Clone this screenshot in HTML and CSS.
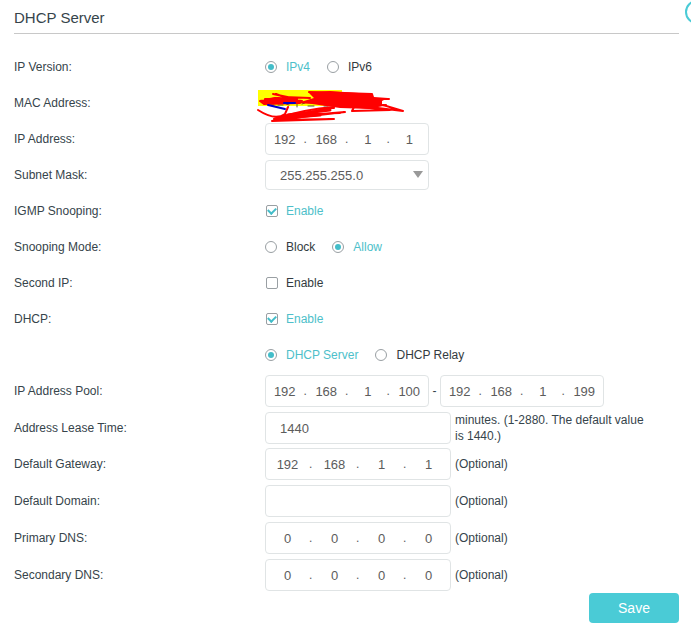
FILE: index.html
```html
<!DOCTYPE html>
<html lang="en">
<head>
<meta charset="utf-8">
<title>DHCP Server</title>
<link rel="stylesheet" href="styles.css">
</head>
<body>
<main class="panel">
  <header class="panel-head">
    <h1 class="title">DHCP Server</h1>
    <button class="help" type="button" aria-label="Help"></button>
  </header>
  <form class="form">
    <div class="row" role="radiogroup" aria-labelledby="ip-version">
      <span class="name" id="ip-version">IP Version:</span>
      <div class="field options">
        <label class="option"><input type="radio" name="version" checked><span>IPv4</span></label>
        <label class="option"><input type="radio" name="version"><span>IPv6</span></label>
      </div>
    </div>
    <div class="row">
      <span class="name">MAC Address:</span>
      <div class="field mac">
        <svg class="scribble" width="150" height="36" viewBox="257 89 150 36" fill="none" stroke-linecap="round" stroke-linejoin="round" aria-hidden="true">
          <path fill="#ffff00" d="M258 90H342V106H258Z"/>
          <path stroke="#555533" d="M271 105H274M278 105H283M286 104L289 105M297 98V107M302 104L305 103M308 106H314M324 106H328"/>
          <path fill="#ff0000" d="M297 103L314 98L308 92L330 91L373 94L374 97L388 98L382 101L382 106L370 109L340 108L312 104Z"/>
          <path fill="#ff0000" d="M264 99L275 97L296 99L302 102L296 104L263 104Z"/>
          <path stroke="#ff0000" stroke-width="2" d="M273 94L297 99L265 99L294 101L262 101L300 103L264 104L260 101L278 98L302 101M276 94L284 97L310 98M309 92L372 94M340 99L389 99M352 107L386 105"/>
          <path stroke="#0000cc" stroke-width="2" d="M268 105L285 109M284 103H295"/>
          <path stroke="#ff0000" stroke-width="2" d="M258 110Q275 121 285 114L288 107M274 119Q305 109 334 107L328 109L284 117L345 112L276 120L334 119L272 121L308 114L340 113M330 108H334M354 107L352 111L390 110L360 107L378 108L403 111L383 105"/>
          <path stroke="#ff0000" stroke-width="3" d="M288 115L330 110M282 118L320 115"/>
        </svg>
      </div>
    </div>
    <div class="row">
      <span class="name">IP Address:</span>
      <div class="field">
        <div class="ip" role="group" aria-label="IP Address">
          <input aria-label="Octet 1" value="192"><i>.</i><input aria-label="Octet 2" value="168"><i>.</i><input aria-label="Octet 3" value="1"><i>.</i><input aria-label="Octet 4" value="1">
        </div>
      </div>
    </div>
    <div class="row">
      <label class="name" for="mask">Subnet Mask:</label>
      <div class="field">
        <div class="picker">
          <select id="mask"><option>255.255.255.0</option></select>
          <svg class="arrow" width="12" height="8" viewBox="0 0 12 8" aria-hidden="true"><path d="M1 0H11L6 7Z" fill="#999999"/></svg>
        </div>
      </div>
    </div>
    <div class="row">
      <span class="name">IGMP Snooping:</span>
      <div class="field options">
        <label class="option"><input type="checkbox" aria-label="Enable IGMP Snooping" checked><span>Enable</span></label>
      </div>
    </div>
    <div class="row" role="radiogroup" aria-labelledby="snoop-mode">
      <span class="name" id="snoop-mode">Snooping Mode:</span>
      <div class="field options">
        <label class="option"><input type="radio" name="mode"><span>Block</span></label>
        <label class="option"><input type="radio" name="mode" checked><span>Allow</span></label>
      </div>
    </div>
    <div class="row">
      <span class="name">Second IP:</span>
      <div class="field options">
        <label class="option"><input type="checkbox" aria-label="Enable Second IP"><span>Enable</span></label>
      </div>
    </div>
    <div class="row">
      <span class="name">DHCP:</span>
      <div class="field options">
        <label class="option"><input type="checkbox" aria-label="Enable DHCP" checked><span>Enable</span></label>
      </div>
    </div>
    <div class="row">
      <span class="name"></span>
      <div class="field options">
        <label class="option"><input type="radio" name="dhcp" checked><span>DHCP Server</span></label>
        <label class="option"><input type="radio" name="dhcp"><span>DHCP Relay</span></label>
      </div>
    </div>
    <div class="row row-roomy">
      <span class="name">IP Address Pool:</span>
      <div class="field">
        <div class="ip" role="group" aria-label="Pool start">
          <input aria-label="Octet 1" value="192"><i>.</i><input aria-label="Octet 2" value="168"><i>.</i><input aria-label="Octet 3" value="1"><i>.</i><input aria-label="Octet 4" value="100">
        </div>
        <span class="dash">-</span>
        <div class="ip" role="group" aria-label="Pool end">
          <input aria-label="Octet 1" value="192"><i>.</i><input aria-label="Octet 2" value="168"><i>.</i><input aria-label="Octet 3" value="1"><i>.</i><input aria-label="Octet 4" value="199">
        </div>
      </div>
    </div>
    <div class="row">
      <label class="name" for="lease">Address Lease Time:</label>
      <div class="field">
        <input class="text" id="lease" value="1440">
        <span class="hint">minutes. (1-2880. The default value is 1440.)</span>
      </div>
    </div>
    <div class="row row-roomy">
      <span class="name">Default Gateway:</span>
      <div class="field">
        <div class="ip ip-wide" role="group" aria-label="Default Gateway">
          <input aria-label="Octet 1" value="192"><i>.</i><input aria-label="Octet 2" value="168"><i>.</i><input aria-label="Octet 3" value="1"><i>.</i><input aria-label="Octet 4" value="1">
        </div>
        <span class="hint">(Optional)</span>
      </div>
    </div>
    <div class="row row-roomy">
      <label class="name" for="domain">Default Domain:</label>
      <div class="field">
        <input class="text" id="domain">
        <span class="hint">(Optional)</span>
      </div>
    </div>
    <div class="row row-roomy">
      <span class="name">Primary DNS:</span>
      <div class="field">
        <div class="ip ip-wide" role="group" aria-label="Primary DNS">
          <input aria-label="Octet 1" value="0"><i>.</i><input aria-label="Octet 2" value="0"><i>.</i><input aria-label="Octet 3" value="0"><i>.</i><input aria-label="Octet 4" value="0">
        </div>
        <span class="hint">(Optional)</span>
      </div>
    </div>
    <div class="row">
      <span class="name">Secondary DNS:</span>
      <div class="field">
        <div class="ip ip-wide" role="group" aria-label="Secondary DNS">
          <input aria-label="Octet 1" value="0"><i>.</i><input aria-label="Octet 2" value="0"><i>.</i><input aria-label="Octet 3" value="0"><i>.</i><input aria-label="Octet 4" value="0">
        </div>
        <span class="hint">(Optional)</span>
      </div>
    </div>
    <div class="actions"><button class="save" type="button">Save</button></div>
  </form>
</main>
</body>
</html>
```
FILE: styles.css
```css
* { box-sizing: border-box; }

body {
  margin: 0;
  background: #ffffff;
  color: #36444b;
  font: 12px/16px "Liberation Sans", Arial, sans-serif;
}

input, select, button { font: inherit; color: inherit; margin: 0; }

.panel {
  position: relative;
  overflow: hidden;
  padding: 0 12px 20px 14px;
}

.panel-head {
  padding: 3px 0 0;
  border-bottom: 1px solid #c8c8c8;
}

.title {
  margin: 0;
  font-size: 15px;
  line-height: 30px;
  font-weight: 400;
}

.help {
  position: absolute;
  top: 0;
  right: -18px;
  width: 24px;
  height: 24px;
  padding: 0;
  border: 2px solid #4acbd6;
  border-radius: 50%;
  background: none;
}

.form { padding-top: 17px; }

.row {
  display: grid;
  grid-template-columns: 251px minmax(0, 1fr);
  align-items: center;
  min-height: 32px;
  margin-bottom: 4px;
}

.row-roomy { margin-bottom: 5px; }
.row:has(+ .actions) { margin-bottom: 2px; }

.field { display: flex; align-items: center; }
.options { gap: 17px; }

.option { display: flex; align-items: center; gap: 9px; color: #333b40; }
.option:has(:checked) { color: #4ebfca; }

.option input {
  appearance: none;
  display: grid;
  place-items: center;
  width: 12px;
  height: 12px;
  border: 1px solid #999fa3;
  background: #ffffff;
}

.option input[type="radio"] { border-radius: 50%; }
.option input[type="checkbox"] { margin-left: 1px; border-radius: 2px; }
.option:has([type="checkbox"]) { gap: 8px; }

.option input[type="radio"]:checked::before {
  content: "";
  width: 6px;
  height: 6px;
  border-radius: 50%;
  background: #43bdc9;
}

.option input[type="checkbox"]:checked::before {
  content: "";
  width: 6px;
  height: 4px;
  margin-bottom: 2px;
  border: solid #43bdc9;
  border-width: 0 0 2px 2px;
  transform: rotate(-45deg);
}

.mac { position: relative; height: 32px; }
.scribble { position: absolute; left: -8px; top: 2px; z-index: 1; }

.ip, .text, .picker select {
  border: 1px solid #e0e4e5;
  border-radius: 4px;
  background: #ffffff;
  color: #5c5c5c;
  font-size: 13px;
}

.ip { display: flex; align-items: center; width: 164px; height: 32px; }
.ip-wide, .text { width: 186px; }

.ip input {
  flex: 1;
  min-width: 0;
  width: 0;
  height: 30px;
  padding: 0;
  border: 0;
  background: none;
  text-align: center;
}

.ip i { width: 4px; font-style: normal; font-size: 12px; }

.text { height: 32px; padding: 0 14px; }

.dash { width: 11px; text-align: center; }

.picker { position: relative; width: 164px; }
.picker select { appearance: none; display: block; width: 100%; height: 30px; padding: 1px 14px 0; }
.arrow { position: absolute; right: 5px; top: 11px; pointer-events: none; }

.hint { max-width: 198px; margin-left: 4px; }

.actions { display: flex; justify-content: flex-end; }

.save {
  width: 90px;
  height: 30px;
  padding: 0;
  border: 0;
  border-radius: 4px;
  background: #4acbd6;
  color: #ffffff;
  font-size: 14px;
}
```
